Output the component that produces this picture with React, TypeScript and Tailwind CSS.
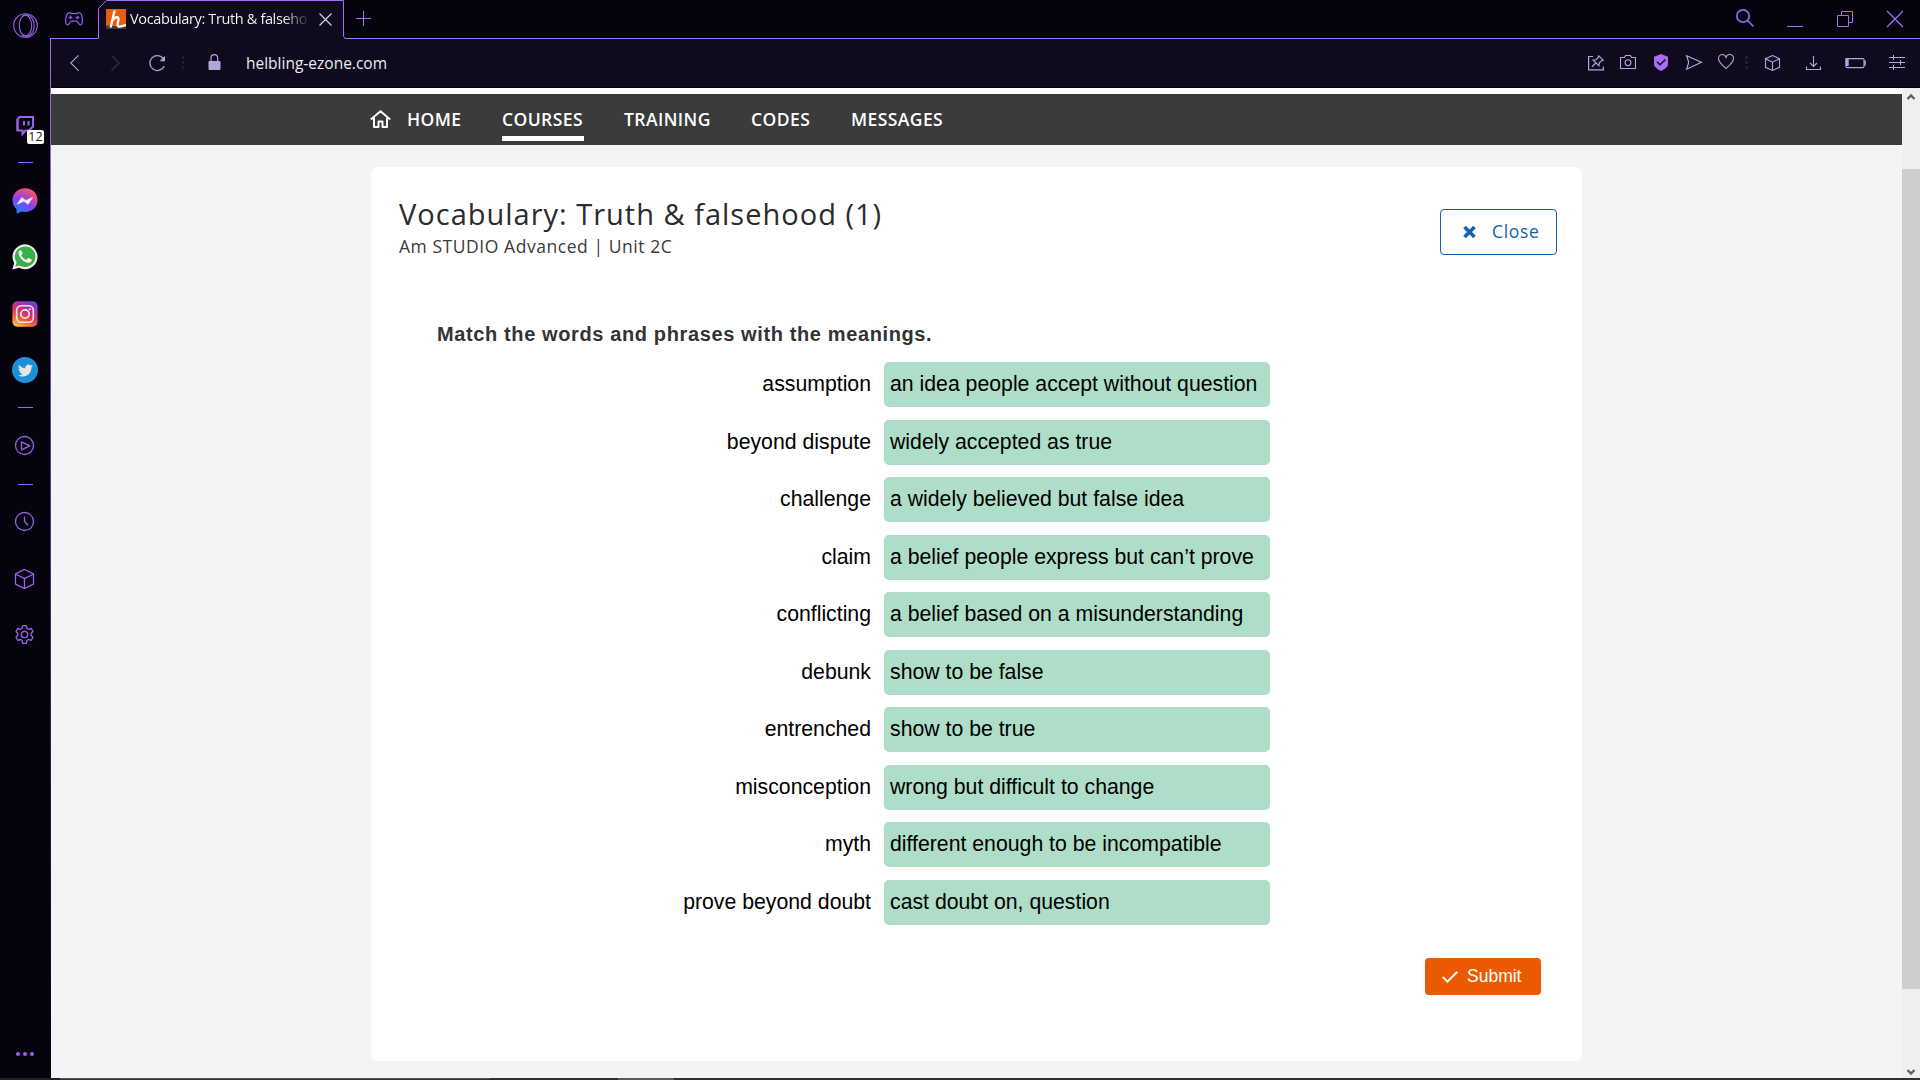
import React from "react";
import { FaTwitter } from "react-icons/fa";

const PAIRS: [string, string][] = [
  ["assumption", "an idea people accept without question"],
  ["beyond dispute", "widely accepted as true"],
  ["challenge", "a widely believed but false idea"],
  ["claim", "a belief people express but can’t prove"],
  ["conflicting", "a belief based on a misunderstanding"],
  ["debunk", "show to be false"],
  ["entrenched", "show to be true"],
  ["misconception", "wrong but difficult to change"],
  ["myth", "different enough to be incompatible"],
  ["prove beyond doubt", "cast doubt on, question"],
];

type IconProps = {
  w: number;
  h: number;
  className?: string;
  sw?: number;
  children: React.ReactNode;
};

function Icon({ w, h, className = "", sw = 1.2, children }: IconProps) {
  return (
    <svg
      width={w}
      height={h}
      viewBox={`0 0 ${w} ${h}`}
      fill="none"
      stroke="currentColor"
      strokeWidth={sw}
      className={`block shrink-0 overflow-visible ${className}`}
    >
      {children}
    </svg>
  );
}

function Dash({ className = "" }: { className?: string }) {
  return <div className={`ml-[18px] h-px w-[15px] shrink-0 bg-[#9b63ea] ${className}`} />;
}

function Sidebar() {
  return (
    <aside className="flex w-[50px] shrink-0 flex-col items-start bg-[#05030d] text-[#9b63ea]">
      <Icon w={26} h={26} className="mt-[13px] ml-[13px]" sw={1.1}>
        <circle cx="12.5" cy="12.5" r="11.8" />
        <ellipse cx="12.5" cy="12.5" rx="6.2" ry="10.2" />
        <path d="M8.8 3.4C10.2 2.300 11.700 1.700 13.400 1.700c4.400 0 7.800 4.700 7.800 10.800s-3.400 10.800-7.800 10.800c-1.700 0-3.300-.6-4.600-1.800" />
      </Icon>
      <div className="relative mt-[77px] ml-4 h-[19px]">
        <Icon w={18} h={19} sw={2}>
          <path d="M1.500 3.500L3.500 1H17v9.500l-4 4H9.500L6.500 18v-3.500h-5z" />
          <path d="M1.500 3v11.500M8 5v4.500M12.500 5v4.500" />
        </Icon>
        <span className="absolute top-[14px] left-[11px] flex h-[14px] w-[17px] items-center justify-center rounded-[2px] bg-white font-['Open_Sans',sans-serif] text-[12.500px] leading-none text-[#222]">
          12
        </span>
      </div>
      <Dash className="mt-[27px]" />
      <svg width="26" height="26" viewBox="0 0 26 26" className="mt-[25px] ml-3 block shrink-0">
        <defs>
          <radialGradient id="msg" cx="0.2" cy="1" r="1.1">
            <stop offset="0" stopColor="#0a8cf5" />
            <stop offset="0.55" stopColor="#8a3df0" />
            <stop offset="0.9" stopColor="#e8507f" />
            <stop offset="1" stopColor="#f0606c" />
          </radialGradient>
        </defs>
        <path d="M13 .3C5.800.3.500 5.500.500 12.300c0 3.500 1.500 6.600 4 8.700l.200 4.700 4.700-2.200c1.100.300 2.300.500 3.600.500 7.200 0 12.500-5.100 12.500-11.900S20.200.300 13 .3z" fill="url(#msg)" />
        <path d="M5.200 16.200l4.500-6.800 4.200 3 6.700-3-4.500 6.900-4.200-3.100z" fill="#eee" stroke="#eee" strokeWidth=".6" />
      </svg>
      <svg width="26" height="26" viewBox="0 0 26 26" className="mt-[30px] ml-3 block shrink-0">
        <path d="M.3 25.500l1.900-6.400A12.500 12.500 0 1 1 7 23.800z" fill="#f0f0f0" />
        <path d="M3.300 22.600l1.300-4.100A10.300 10.300 0 1 1 7.600 21.400z" fill="#3cae48" />
        <path d="M9.400 6.700c-.300-.600-.900-.600-1.400-.400-1.200.600-1.700 1.900-1.500 3.200.700 4.100 5.200 8.900 9.700 9.300 1.700.1 3.200-.8 3.500-2.500.1-.6 0-.9-.4-1.100l-2.500-1.200c-.4-.2-.700-.1-1 .3l-1 1.200c-.2.3-.500.3-.8.2-2-.8-3.500-2.200-4.500-4-.2-.3-.1-.6.1-.8l.8-1c.2-.3.200-.5.1-.8z" fill="#f0f0f0" />
      </svg>
      <svg width="26" height="26" viewBox="0 0 26 26" className="mt-[31px] ml-3 block shrink-0">
        <defs>
          <linearGradient id="ig" x1="0.2" y1="1" x2="0.7" y2="0">
            <stop offset="0" stopColor="#f9c34f" />
            <stop offset="0.3" stopColor="#ef6236" />
            <stop offset="0.55" stopColor="#d32f6f" />
            <stop offset="0.8" stopColor="#a635b0" />
            <stop offset="1" stopColor="#6a43c8" />
          </linearGradient>
        </defs>
        <rect x=".4" y=".2" width="25.200" height="25.600" rx="5" fill="url(#ig)" />
        <rect x="4.700" y="4.700" width="16.600" height="16.600" rx="4.500" fill="none" stroke="#f2e6ee" strokeWidth="1.600" />
        <circle cx="13" cy="13" r="4.200" fill="none" stroke="#f2e6ee" strokeWidth="1.700" />
        <circle cx="17.900" cy="8.200" r="1" fill="#f2e6ee" />
      </svg>
      <div className="mt-[30px] ml-3 flex h-[26px] w-[26px] shrink-0 items-center justify-center rounded-full bg-[#1d90db] text-[#e6e6e6]">
        <FaTwitter size={15} />
      </div>
      <Dash className="mt-[24px]" />
      <Icon w={20} h={20} className="mt-[28px] ml-[15px]" sw={1.3}>
        <circle cx="9.500" cy="9.500" r="9" />
        <path d="M6.500 5.800v8l8.200-4z" strokeLinejoin="round" />
      </Icon>
      <Dash className="mt-[28px]" />
      <Icon w={20} h={20} className="mt-[27px] ml-[15px]" sw={1.3}>
        <circle cx="9.500" cy="9.500" r="9" />
        <path d="M9.500 4.500v5l3.400 3.800" />
      </Icon>
      <Icon w={20} h={20} className="mt-[37px] ml-[15px]" sw={1.3}>
        <path d="M9.500.5l9 4.500v10l-9 4.500-9-4.500V5zM.5 5l9 4.500 9-4.500M9.500 9.500v10" />
      </Icon>
      <Icon w={19} h={20} className="mt-[36px] ml-[15px]" sw={1.3}>
        <path d="M7.700.6h3.600l.7 2.900 1.400.8 2.900-.8 1.700 3-2 2v1.700l2 2-1.700 3.100-2.900-.8-1.400.8-.7 3.100H7.700L7 15.300l-1.400-.8-2.900.8L1 12.200l2-2V8.500l-2-2 1.700-3 2.900.8L7 3.500z" strokeLinejoin="round" />
        <circle cx="9.500" cy="9.500" r="3.200" />
      </Icon>
      <div className="mt-auto mb-[22px] ml-4 flex gap-[3px]">
        {[0, 1, 2].map((i) => (
          <span key={i} className="h-1 w-1 rounded-full bg-[#9b63ea]" />
        ))}
      </div>
    </aside>
  );
}

function TabStrip() {
  return (
    <div className="flex h-[39px] shrink-0 items-start bg-[#05030d] text-[#a66df5]">
      <div className="flex h-[39px] w-12 shrink-0 items-start border-b border-[#a66df5]">
        <Icon w={18} h={14} className="mt-[12px] ml-[15px] text-[#8f5ae0]" sw={1.3}>
          <path d="M4.500.6c1.100 0 1.400 1 2.500 1h4c1.100 0 1.400-1 2.500-1 2.700 0 3.900 4.400 3.900 8.200 0 2.700-.7 4-2 4-1.800 0-2.400-3.600-4-3.600H6.600c-1.600 0-2.200 3.600-4 3.600-1.300 0-2-1.300-2-4C.6 5 1.800.6 4.500.6z" />
          <path d="M3.700 5.500h3.600M5.500 3.700v3.600M12.500 3.700v3.600M10.700 5.500h3.600" />
        </Icon>
      </div>
      <div className="relative flex h-[39px] w-[246px] shrink-0 items-start">
        <svg width="246" height="39" viewBox="0 0 246 39" className="absolute inset-0 overflow-visible">
          <path d="M.5 39V8.500L8.500.5H245.500V37l1.500 2z" fill="#0f0b1c" />
          <path d="M0 38.500H.5V8.500L8.500.5H245.500V36.500l2 2" fill="none" stroke="#a66df5" />
        </svg>
        <svg width="20" height="20" viewBox="0 0 20 20" className="relative mt-[9px] ml-2 block shrink-0">
          <rect width="20" height="20" fill="#ea5b0c" />
          <path d="M0 16.500L20 18v2H0z" fill="#3a3b3a" />
          <path d="M8.600 1.500L4.600 18.500M5.800 12.500C7.500 8 13 6.500 12.500 10.500L11.600 15.500c-.2 3 3 2.700 8.400.3" fill="none" stroke="#fff" strokeWidth="2.300" />
        </svg>
        <span className="relative mt-[9px] ml-1 w-[182px] bg-gradient-to-r from-white from-84% to-[#0f0b1c] bg-clip-text font-['Open_Sans',sans-serif] text-[14.500px] leading-5 tracking-[-0.36px] whitespace-nowrap text-transparent">
          Vocabulary: Truth &amp; falseho
        </span>
        <Icon w={13} h={13} className="relative mt-[13px] ml-[7px] text-[#d8d4e8]" sw={1.200}>
          <path d="M.5.5l12 12M12.500.5l-12 12" />
        </Icon>
      </div>
      <div className="flex h-[39px] flex-1 items-start border-b border-[#a66df5]">
        <Icon w={15} h={15} className="mt-[11px] ml-[12px]" sw={1}>
          <path d="M7.500 0v15M0 7.500h15" />
        </Icon>
        <Icon w={18} h={18} className="mt-[9px] ml-auto text-[#9b63ea]" sw={1.7}>
          <circle cx="7" cy="7" r="6.200" />
          <path d="M11.500 11.500l6 6" />
        </Icon>
        <Icon w={16} h={1} className="mt-[26px] ml-[33px]" sw={1}>
          <path d="M0 .5h16" />
        </Icon>
        <Icon w={16} h={16} className="mt-[11px] ml-[34px]" sw={1}>
          <path d="M.5 4.500h11v11H.5zM4.500 4.500v-4h11v11h-4" />
        </Icon>
        <Icon w={16} h={16} className="mt-[11px] mr-[17px] ml-[34px]" sw={1.2}>
          <path d="M0 0l16 16M16 0L0 16" />
        </Icon>
      </div>
    </div>
  );
}

function Toolbar() {
  return (
    <div className="flex h-[49px] shrink-0 items-start border-b border-[#05030d] bg-[#0f0b1c] text-[#b3a5dc]">
      <Icon w={9} h={16} className="mt-4 ml-[19px]" sw={1.1}>
        <path d="M8.500.3L.8 8l7.700 7.700" />
      </Icon>
      <Icon w={9} h={16} className="mt-4 ml-[32px] text-[#3d3650]" sw={1.1}>
        <path d="M.5.3L8.200 8 .5 15.700" />
      </Icon>
      <Icon w={17} h={17} className="mt-4 ml-[29px]" sw={1.3}>
        <path d="M14.500 3.700A7.500 7.500 0 1 0 15.300 11" />
        <path d="M16 .8v5.400h-5.400z" fill="currentColor" stroke="none" />
      </Icon>
      <Icon w={3} h={13} className="mt-[17px] ml-[16px] text-[#231a42]" sw={2}>
        <path d="M1 0v13" strokeDasharray="3 2" />
      </Icon>
      <Icon w={13} h={16} className="mt-[15px] ml-[23px]" sw={1.2}>
        <path d="M3 8V4a3.200 3.200 0 0 1 6.600 0v4" />
        <rect x=".5" y="7" width="12" height="9" rx="1.200" fill="currentColor" stroke="none" />
      </Icon>
      <span className="mt-[12px] ml-[25px] font-['Open_Sans',sans-serif] text-[15.500px] leading-6 text-[#eceaf2]">
        helbling-ezone.com
      </span>
      <Icon w={16} h={16} className="mt-4 ml-auto" sw={1.2}>
        <path d="M5 1.500H.6v13.300h14.800v-3.300" />
        <path d="M10.800.8l4.400 4.400-1.600.5-2.400 2.400-.3 2.700-5.700-5.700 2.700-.3L10.300 2.400zM7.800 8L4 11.700" />
      </Icon>
      <Icon w={16} h={14} className="mt-4 ml-4" sw={1.100}>
        <path d="M.5 2.500h4l1-2h5l1 2h4v11H.5z" strokeLinejoin="round" />
        <circle cx="8" cy="7.700" r="2.900" />
      </Icon>
      <Icon w={14} h={17} className="mt-[15px] ml-[18px]">
        <path d="M7 0l7 2.800V10.500c0 2-3.500 5-7 6.500-3.500-1.500-7-4.500-7-6.500V2.800z" fill="#a66df5" stroke="none" />
        <path d="M3 7.800l3 3 5.500-5.300" stroke="#0f0b1c" strokeWidth="1.400" />
      </Icon>
      <Icon w={16} h={15} className="mt-4 ml-[18px]" sw={1.200}>
        <path d="M.7.8L15.300 7.300.7 14.200l2-6.900z" />
      </Icon>
      <Icon w={16} h={15} className="mt-[15px] ml-4" sw={1.100}>
        <path d="M8 14.500C4.500 11.500.5 8.500.5 4.600.5 2 2.400.5 4.400.5 6 .5 7.400 1.600 8 3.300 8.600 1.600 10 .5 11.600.5c2 0 3.900 1.500 3.900 4.100 0 3.900-4 6.900-7.500 9.900z" />
      </Icon>
      <Icon w={3} h={13} className="mt-[17px] ml-[11px] text-[#231a42]" sw={3}>
        <path d="M1.500 0v13" strokeDasharray="3 2" />
      </Icon>
      <Icon w={16} h={16} className="mt-4 ml-[17px]" sw={1.100}>
        <path d="M7.500.5l7 3.200v8.600l-7 3.200-7-3.200V3.700zM.5 3.700l7 3.500 7-3.500M7.500 7.200v8.300" />
      </Icon>
      <Icon w={16} h={15} className="mt-[17px] ml-[25px]" sw={1.100}>
        <path d="M7.500 0v10.500M4 7l3.500 3.500L11 7M.5 10.500v3h14v-3" />
      </Icon>
      <Icon w={21} h={11} className="mt-[19px] ml-[23px]" sw={1.100}>
        <rect x="1" y=".6" width="18" height="9" rx="1" />
        <path d="M.5 0h3.200v8H.5z" fill="currentColor" stroke="none" />
        <path d="M20 2.500v5" strokeWidth="1.600" />
      </Icon>
      <Icon w={16} h={15} className="mt-4 mr-[15px] ml-[23px]" sw={1}>
        <path d="M0 2.500h16M0 7.500h16M0 12.500h16M4.500 0v5M11.500 5v5M4.500 10v5" />
      </Icon>
    </div>
  );
}

function SiteNav() {
  return (
    <nav className="flex h-[51px] shrink-0 items-start bg-[#3a3b3a] pl-[319px] font-['Open_Sans',sans-serif] text-[17.500px] leading-6 font-semibold tracking-[0.420px] text-white">
      <Icon w={21} h={18} className="mt-[16px] mr-[16px]" sw={2}>
        <path d="M.8 9.500L10.500 1.300l9.700 8.200M4 8v9h4.500v-5.500h4V17H17V8" strokeLinejoin="round" />
      </Icon>
      <span className="mt-[13px] w-[95px]">HOME</span>
      <span className="mt-[13px] mr-[40px] h-[34px] w-[82px] border-b-[5px] border-white">COURSES</span>
      <span className="mt-[13px] w-[127px]">TRAINING</span>
      <span className="mt-[13px] w-[100px]">CODES</span>
      <span className="mt-[13px]">MESSAGES</span>
    </nav>
  );
}

function ExerciseCard() {
  return (
    <main className="mt-[22px] ml-[320px] flex h-[894px] w-[1211px] shrink-0 flex-col rounded-[7px] bg-white">
      <header className="flex items-start justify-between pt-[25px] pr-[25px] pl-[28px] font-['Open_Sans',sans-serif]">
        <div>
          <h1 className="text-[29px] leading-[44px] tracking-[1px] text-[#2b2b2b]">
            Vocabulary: Truth &amp; falsehood (1)
          </h1>
          <p className="text-[17.500px] leading-[20px] tracking-[0.550px] text-[#3a3b3a]">
            Am STUDIO Advanced | Unit 2C
          </p>
        </div>
        <button className="mt-[17px] flex h-[46px] w-[117px] items-center rounded-[4px] border border-[#1560ac] pl-[22px] text-[17.500px] font-medium tracking-[0.700px] text-[#1560ac]">
          <Icon w={13} h={12} className="mr-[16px]" sw={3.600}>
            <path d="M1.500 1l10 10M11.500 1l-10 10" />
          </Icon>
          <span className="pb-[2px]">Close</span>
        </button>
      </header>
      <section className="mt-[66px] font-['Liberation_Sans',Arial,sans-serif] text-[21.250px] text-black">
        <h2 className="pl-[66px] text-[20px] leading-6 font-bold tracking-[0.620px] text-[#333]">
          Match the words and phrases with the meanings.
        </h2>
        <ul className="mt-[16px]">
          {PAIRS.map(([word, meaning]) => (
            <li key={word} className="mb-[12px] flex h-[45px] items-center last:mb-0 odd:mb-[13px]">
              <span className="w-[500px] text-right">{word}</span>
              <span className="ml-[13px] flex h-[45px] w-[386px] items-center rounded-[5px] bg-[#aeddc8] pl-[6px]">
                {meaning}
              </span>
            </li>
          ))}
        </ul>
      </section>
      <button className="mt-[33px] ml-[1054px] flex h-[37px] w-[116px] items-center rounded-[4px] bg-[#eb5a00] pl-[17px] font-['Liberation_Sans',Arial,sans-serif] text-[17.500px] text-white">
        <Icon w={16} h={12} className="mr-[9px]" sw={2}>
          <path d="M.8 6l4.700 4.700L15.300.8" />
        </Icon>
        Submit
      </button>
    </main>
  );
}

function Scrollbar() {
  return (
    <div className="flex w-[18px] shrink-0 flex-col items-center bg-[#efefef] text-[#606060]">
      <Icon w={8} h={6} className="mt-[6px]" sw={2.400}>
        <path d="M.5 5L4 1.500 7.500 5" />
      </Icon>
      <div className="mt-[69px] h-[820px] w-full bg-[#cdcdcd]" />
      <Icon w={8} h={6} className="mt-auto mb-[3px]" sw={2.400}>
        <path d="M.5 1L4 4.500 7.500 1" />
      </Icon>
    </div>
  );
}

export default function App() {
  return (
    <div className="flex h-[1080px] w-[1920px] flex-col overflow-hidden bg-[#05030d]">
      <div className="flex h-[1078px] shrink-0">
        <Sidebar />
        <div className="flex w-[1870px] flex-col">
          <TabStrip />
          <div className="flex flex-1">
            <div className="w-px bg-gradient-to-b from-[#a66df5] to-[#05030d]" />
            <div className="flex flex-1 flex-col">
              <Toolbar />
              <div className="flex h-[990px]">
                <div className="flex flex-1 flex-col border-t-[6px] border-white bg-[#f3f4f6]">
                  <SiteNav />
                  <ExerciseCard />
                </div>
                <Scrollbar />
              </div>
            </div>
          </div>
        </div>
      </div>
      <div className="flex h-[2px] shrink-0 bg-[#303030]">
        <div className="w-[60px] bg-[#222222]" />
        <div className="w-[430px] border-t border-[#555555] bg-[#303030]" />
        <div className="ml-[128px] w-[56px] bg-[#5a5a5a]" />
      </div>
    </div>
  );
}
